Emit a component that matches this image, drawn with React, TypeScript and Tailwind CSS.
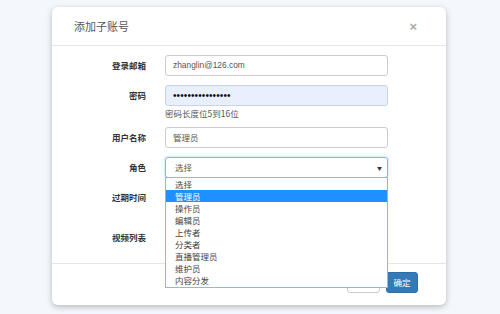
import React from "react";

const font = { fontFamily: '"Noto Sans CJK SC", "Liberation Sans", sans-serif' };

export default function App() {
  const options = ["选择", "管理员", "操作员", "编辑员", "上传者", "分类者", "直播管理员", "维护员", "内容分发"];
  return (
    <div className="w-[500px] h-[314px] bg-[#f4f7fb] pt-[7px] pl-[52px] overflow-hidden" style={font}>
      <div className="relative w-[394px] h-[298px] bg-white rounded-[6px] shadow-[0_2px_6px_rgba(0,0,0,0.25)] flex flex-col">
        <div className="h-[39px] border-b border-[#e5e5e5] flex items-center justify-between pl-[22px] pr-[29px]">
          <span className="text-[11px] text-[#555] leading-none">添加子账号</span>
          <span className="text-[13px] text-[#aaa] leading-none font-bold" style={{ fontFamily: '"Liberation Sans", sans-serif' }}>×</span>
        </div>
        <div className="flex-1 flex flex-col pt-[9px]">
          <div className="flex items-center h-[21px]">
            <div className="w-[94px] text-right text-[8.5px] font-bold text-[#333]">登录邮箱</div>
            <div className="ml-[19px] w-[223px] h-[21px] border border-[#ccc] rounded-[3px] flex items-center pl-[7px] text-[8.4px] text-[#555]" style={{ fontFamily: '"Liberation Sans", "Noto Sans CJK SC", sans-serif' }}>zhanglin@126.com</div>
          </div>
          <div className="flex items-center h-[21px] mt-[9px]">
            <div className="w-[94px] text-right text-[8.5px] font-bold text-[#333]">密码</div>
            <div className="ml-[19px] w-[223px] h-[21px] border border-[#c8d3e6] bg-[#e8f0fe] rounded-[3px] flex items-center pl-[7px] text-[10px] text-[#111] tracking-[0.1px]" style={{ fontFamily: '"Liberation Sans", sans-serif' }}>••••••••••••••••</div>
          </div>
          <div className="ml-[113px] mt-[1px] text-[8.5px] text-[#555] leading-[12px]">密码长度位5到16位</div>
          <div className="flex items-center h-[21px] mt-[8px]">
            <div className="w-[94px] text-right text-[8.5px] font-bold text-[#333]">用户名称</div>
            <div className="ml-[19px] w-[223px] h-[21px] border border-[#ccc] rounded-[3px] flex items-center pl-[7px] text-[8.5px] text-[#555]">管理员</div>
          </div>
          <div className="flex items-center h-[21px] mt-[9px] relative">
            <div className="w-[94px] text-right text-[8.5px] font-bold text-[#333]">角色</div>
            <div className="ml-[19px] w-[223px] h-[21px] border border-[#86b7ec] rounded-[3px] flex items-center justify-between pl-[9px] pr-[4px] text-[8.5px] text-[#555] shadow-[0_0_3px_rgba(102,175,233,0.6)]">
              <span>选择</span>
              <span className="text-[5px] text-[#333] mr-[1px]">▼</span>
            </div>
            <div className="absolute left-[113px] top-[20px] w-[223px] bg-white border border-[#8fb8e8] z-10 flex flex-col pt-[0px] pb-[1px]">
              {options.map((o, i) => (
                <div
                  key={o}
                  className={
                    i === 1
                      ? "h-[12px] leading-[12px] pl-[9px] text-[8.5px] bg-[#1e90ff] text-white"
                      : "h-[12px] leading-[12px] pl-[9px] text-[8.5px] text-[#444]"
                  }
                >
                  {o}
                </div>
              ))}
            </div>
          </div>
          <div className="flex items-center h-[21px] mt-[9px]">
            <div className="w-[94px] text-right text-[8.5px] font-bold text-[#333]">过期时间</div>
          </div>
          <div className="flex items-center h-[21px] mt-[19px]">
            <div className="w-[94px] text-right text-[8.5px] font-bold text-[#333]">视频列表</div>
          </div>
        </div>
        <div className="h-[42px] border-t border-[#e5e5e5] flex items-start justify-end gap-[6px] pt-[8px] pr-[28px]">
          <div className="w-[33px] h-[21px] border border-[#ccc] rounded-[3px] bg-white" />
          <div className="w-[32px] h-[21px] rounded-[3px] bg-[#337ab7] border border-[#2e6da4] text-white text-[8.5px] flex items-center justify-center">确定</div>
        </div>
      </div>
    </div>
  );
}
